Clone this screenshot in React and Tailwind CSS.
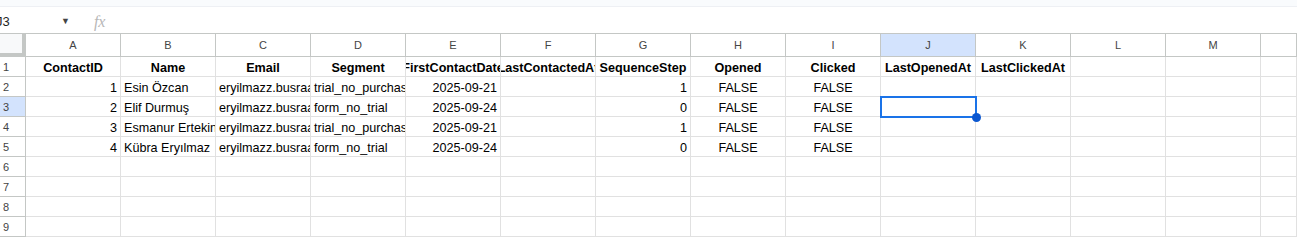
const cols = ["A", "B", "C", "D", "E", "F", "G", "H", "I", "J", "K", "L", "M", ""];

const header = [
  "ContactID",
  "Name",
  "Email",
  "Segment",
  "FirstContactDate",
  "LastContactedAt",
  "SequenceStep",
  "Opened",
  "Clicked",
  "LastOpenedAt",
  "LastClickedAt",
];

const rows = [
  ["1", "Esin Özcan", "eryilmazz.busraa@gmail.com", "trial_no_purchase", "2025-09-21", "", "1", "FALSE", "FALSE"],
  ["2", "Elif Durmuş", "eryilmazz.busraa@gmail.com", "form_no_trial", "2025-09-24", "", "0", "FALSE", "FALSE"],
  ["3", "Esmanur Ertekin", "eryilmazz.busraa@gmail.com", "trial_no_purchase", "2025-09-21", "", "1", "FALSE", "FALSE"],
  ["4", "Kübra Eryılmaz", "eryilmazz.busraa@gmail.com", "form_no_trial", "2025-09-24", "", "0", "FALSE", "FALSE"],
];

// A, E, G right; H, I center; rest left
const align = {
  0: "justify-end",
  4: "justify-end",
  6: "justify-end",
  7: "justify-center",
  8: "justify-center",
};

function Cell({ children, className = "" }) {
  return (
    <div
      className={`flex h-full items-center overflow-hidden whitespace-nowrap border-b border-r border-[#e1e1e1] px-[3px] pt-[3px] text-[12.6px] text-black ${className}`}
    >
      {children}
    </div>
  );
}

export default function App() {
  return (
    <div
      className="h-[237px] w-[1297px] overflow-hidden bg-white"
      style={{ fontFamily: '"Liberation Sans", Arial, sans-serif' }}
    >
      <div className="h-[7px] border-b border-[#eef0f4] bg-[#f9fbfd]" />

      <div className="flex h-[27px] items-center border-b border-[#c4c7c5] pt-[3px]">
        <div className="ml-[-4px] w-[65px] text-[13px] text-[#1f1f1f]">J3</div>
        <span className="text-[9px] text-[#444]">▼</span>
        <span
          className="ml-[24px] text-[16px] italic text-[#b7b7b7]"
          style={{ fontFamily: '"Liberation Serif", serif' }}
        >
          fx
        </span>
      </div>

      <div className="grid grid-cols-[26px_repeat(13,95px)_1fr] grid-rows-[23px_repeat(9,20px)]">
        <div className="border-b-4 border-r-4 border-[#c4c7c5] bg-[#f8f9fa]" />
        {cols.map((c, i) => (
          <div
            key={"h" + i}
            className={`flex items-center justify-center border-b border-r border-[#c4c7c5] pt-[1px] text-[11px] text-[#444] ${
              c === "J" ? "bg-[#d3e3fd]" : "bg-white"
            }`}
          >
            {c}
          </div>
        ))}

        {Array.from({ length: 9 }).map((_, r) => {
          const rowNum = r + 1;
          const data = r === 0 ? header : rows[r - 1] || [];
          return [
            <div
              key={"r" + r}
              className={`flex items-center border-b border-r border-[#c4c7c5] pl-[3px] pt-[2px] text-[11px] text-[#444] ${
                rowNum === 3 ? "bg-[#d3e3fd]" : "bg-white"
              }`}
            >
              {rowNum}
            </div>,
            ...cols.map((c, ci) => {
              const val = data[ci] || "";
              const isSel = c === "J" && rowNum === 3;
              const cls = r === 0 ? "justify-center font-bold" : align[ci] || "justify-start";
              return (
                <div key={r + "-" + ci} className={isSel ? "relative z-10" : "relative"}>
                  <Cell className={cls}>{val}</Cell>
                  {isSel && (
                    <>
                      <div className="absolute inset-[-1px] border-2 border-[#1a73e8]" />
                      <div className="absolute bottom-[-5px] right-[-5px] size-[9px] rounded-full bg-[#0b57d0]" />
                    </>
                  )}
                </div>
              );
            }),
          ];
        })}
      </div>
    </div>
  );
}
